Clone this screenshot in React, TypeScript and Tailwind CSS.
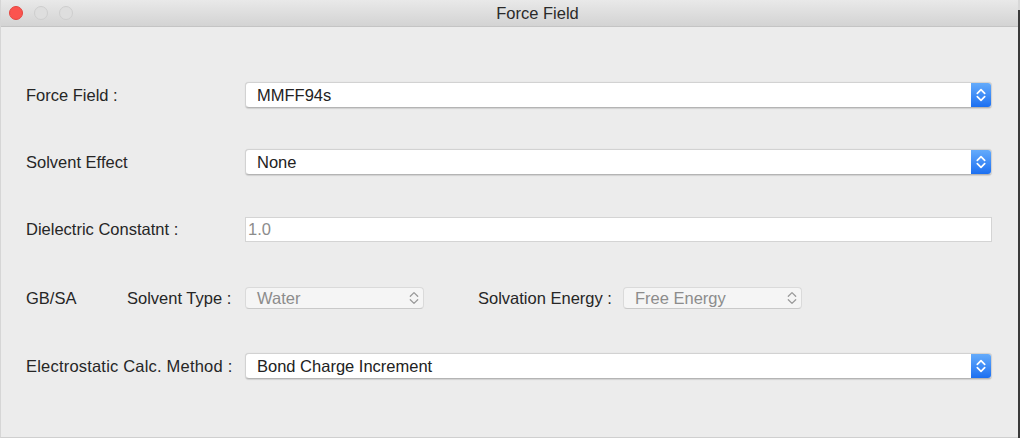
import React from "react";

const Chevrons = ({ color, w = 10, h = 14, sw = 1.7 }: { color: string; w?: number; h?: number; sw?: number }) => (
  <svg width={w} height={h} viewBox="0 0 10 14" fill="none">
    <path d="M1.3 5.3 L5 1.6 L8.7 5.3" stroke={color} strokeWidth={sw} strokeLinecap="round" strokeLinejoin="round" />
    <path d="M1.3 8.7 L5 12.4 L8.7 8.7" stroke={color} strokeWidth={sw} strokeLinecap="round" strokeLinejoin="round" />
  </svg>
);

const BigSelect = ({ value }: { value: string }) => (
  <div className="flex-1 h-[26px] flex rounded-[4px] bg-white border border-[#d2d2d2] border-b-[#b4b4b4] shadow-[0_0.5px_1px_rgba(0,0,0,0.12)] overflow-hidden">
    <div className="flex-1 flex items-center pl-[11px] text-[16.5px] text-[#222]">{value}</div>
    <div className="w-[20px] h-full flex items-center justify-center bg-gradient-to-b from-[#64abfb] to-[#1b6ff1]">
      <Chevrons color="#ffffff" w={10} h={14} sw={1.7} />
    </div>
  </div>
);

const SmallSelect = ({ value }: { value: string }) => (
  <div className="w-[179px] h-[22px] flex items-center justify-between rounded-[4px] bg-[#f5f5f5] border border-[#dadada] border-b-[#c9c9c9] pl-[11px] pr-[4px]">
    <span className="text-[16.5px] text-[#8c8c8c]">{value}</span>
    <Chevrons color="#9a9a9a" w={10} h={14} sw={1.3} />
  </div>
);

export default function App() {
  return (
    <div className="w-[1020px] h-[438px] flex bg-[#ececec] font-['Liberation_Sans',Arial,sans-serif] overflow-hidden">
      <div className="w-[1018px] h-[438px] flex flex-col bg-[#ececec] border-l border-[#d6d6d6] border-b border-b-[#cfcfcf]">
        {/* Title bar */}
        <div className="h-[27px] shrink-0 relative flex items-center justify-center bg-gradient-to-b from-[#e9e9e9] to-[#d3d3d3] border-b border-[#c4c4c4]">
          <div className="absolute left-[8px] top-[6px] flex gap-[11px]">
            <div className="w-[14px] h-[14px] rounded-full bg-[#fb544f] border border-[#e5453f]" />
            <div className="w-[14px] h-[14px] rounded-full bg-[#dedede] border border-[#cecece]" />
            <div className="w-[14px] h-[14px] rounded-full bg-[#dedede] border border-[#cecece]" />
          </div>
          <span className="text-[16.5px] text-[#2a2a2a] ml-[56px]">Force Field</span>
        </div>

        {/* Content */}
        <div className="flex flex-col pl-[25px] pr-[26px] text-[16.5px] text-[#262626]">
          <div className="mt-[55px] h-[26px] flex items-center">
            <div className="w-[219px] shrink-0">Force Field :</div>
            <BigSelect value="MMFF94s" />
          </div>

          <div className="mt-[41px] h-[26px] flex items-center">
            <div className="w-[219px] shrink-0">Solvent Effect</div>
            <BigSelect value="None" />
          </div>

          <div className="mt-[42px] h-[26px] flex items-start">
            <div className="w-[219px] shrink-0 h-[25px] flex items-center">Dielectric Constatnt :</div>
            <div className="flex-1 h-[25px] flex items-center bg-white border border-[#d4d4d4] pl-[2px] text-[#8c8c8c]">
              1.0
            </div>
          </div>

          <div className="mt-[42px] h-[26px] flex items-center">
            <div className="w-[101px] shrink-0">GB/SA</div>
            <div className="w-[118px] shrink-0">Solvent Type :</div>
            <SmallSelect value="Water" />
            <div className="w-[54px] shrink-0" />
            <div className="w-[145px] shrink-0">Solvation Energy :</div>
            <SmallSelect value="Free Energy" />
          </div>

          <div className="mt-[42px] h-[26px] flex items-center">
            <div className="w-[219px] shrink-0 tracking-[0.2px]">Electrostatic Calc. Method :</div>
            <BigSelect value="Bond Charge Increment" />
          </div>
        </div>
      </div>
      <div className="flex flex-col w-[2px]">
        <div className="h-[10px] bg-[#d8d8d8]" />
        <div className="flex-1 bg-[#3a3a3a]" />
      </div>
    </div>
  );
}
